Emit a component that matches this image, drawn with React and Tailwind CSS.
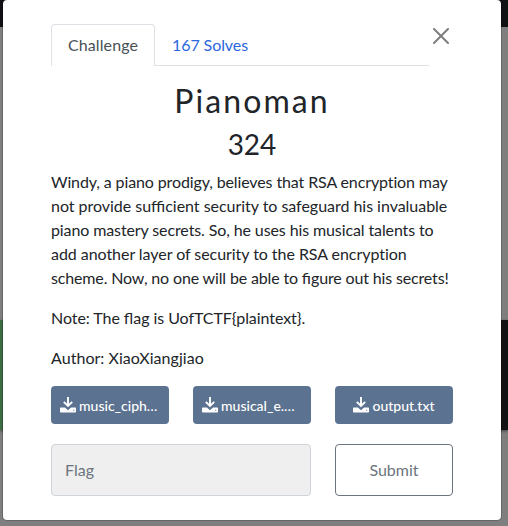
const files = [
  { name: "music_ciph…", layout: "justify-start pl-[9px]" },
  { name: "musical_e.…", layout: "justify-start pl-[9px]" },
  { name: "output.txt", layout: "justify-center" },
];

function DownloadIcon() {
  return (
    <svg viewBox="0 0 16 16" className="h-4 w-4 shrink-0">
      <path d="M8 0v8M3.8 4.9L8 9l4.2-4.1" fill="none" stroke="currentColor" strokeWidth="1.9" />
      <path
        fill="currentColor"
        fillRule="evenodd"
        d="M.7 10.6h4.2L8 13.2l3.1-2.6h4.2q.7 0 .7.7v3.4q0 .8-.8.8H.8q-.8 0-.8-.8v-3.4q0-.7.7-.7zM13.2 12.8v1h1v-1z"
      />
    </svg>
  );
}

function Tabs() {
  return (
    <div className="flex h-[42px] grow">
      <button className="w-[104px] rounded-t-[4px] border border-b-0 border-[#dee2e6] pb-px tracking-[0.12px] text-[#495057]">
        Challenge
      </button>
      <button className="grow border-b border-[#dee2e6] pl-[17px] text-left tracking-[-0.08px] text-[#2a66dd]">
        167 Solves
      </button>
    </div>
  );
}

function CloseButton() {
  return (
    <button className="flex h-6 w-6 items-center justify-center" aria-label="Close">
      <svg viewBox="0 0 16 16" className="h-4 w-4 fill-black opacity-50">
        <path d="M.293.293a1 1 0 011.414 0L8 6.586 14.293.293a1 1 0 111.414 1.414L9.414 8l6.293 6.293a1 1 0 01-1.414 1.414L8 9.414l-6.293 6.293a1 1 0 01-1.414-1.414L6.586 8 .293 1.707a1 1 0 010-1.414z" />
      </svg>
    </button>
  );
}

// Keeps the f-ligatures inside lines that have custom tracking.
function Lig({ children }) {
  return <span className="tracking-normal">{children}</span>;
}

function Backdrop() {
  return (
    <div className="absolute inset-0 flex flex-col bg-[#7f7f7f]">
      <div className="h-[27px] bg-[#101114]" />
      <div className="h-[293px]" />
      <div className="flex h-[110px] shadow-[0_1px_3px_rgba(0,0,0,0.5)]">
        <div className="w-1/2 bg-[#3e6b41]" />
        <div className="w-1/2 bg-[#101213]" />
      </div>
    </div>
  );
}

export default function App() {
  return (
    <div className="relative h-[526px] w-[508px] overflow-hidden font-['Lato',sans-serif] text-base leading-6 text-[#212529]">
      <Backdrop />
      <div className="relative -mt-px ml-0.5 h-[522px] w-[500px] rounded-[5px] border border-black/20 bg-white bg-clip-padding px-12 pt-6">
        <div className="flex">
          <Tabs />
          <CloseButton />
        </div>
        <h2 className="mt-4 text-center text-[32px] leading-[38px] tracking-[2.1px]">Pianoman</h2>
        <h3 className="mt-[7px] text-center text-[28px] leading-[34px]">324</h3>
        <div className="mt-[9px] flex flex-col gap-4 whitespace-nowrap">
          <p>
            <span className="block tracking-[-0.12px]">Windy, a piano prodigy, believes that RSA encryption may</span>
            <span className="block tracking-[-0.03px]">
              not provide su<Lig>ffi</Lig>cient security to safeguard his invaluable
            </span>
            <span className="block tracking-[-0.11px]">piano mastery secrets. So, he uses his musical talents to</span>
            <span className="block tracking-[-0.05px]">add another layer of security to the RSA encryption</span>
            <span className="block tracking-[-0.15px]">
              scheme. Now, no one will be able to <Lig>fi</Lig>gure out his secrets!
            </span>
          </p>
          <p className="tracking-[-0.06px]">
            Note: The <Lig>fl</Lig>ag is UofTCTF{"{plaintext}"}.
          </p>
          <p className="tracking-[0.04px]">Author: XiaoXiangjiao</p>
        </div>
        <div className="mt-4 grid grid-cols-3 gap-6">
          {files.map(({ name, layout }) => (
            <button
              key={name}
              className={`flex h-[38px] items-center gap-[3px] rounded-[4px] bg-[#5b7290] text-sm font-medium text-white ${layout}`}
            >
              <DownloadIcon />
              <span className="pt-px">{name}</span>
            </button>
          ))}
        </div>
        <div className="mt-5 grid grid-cols-3 gap-6">
          <input
            className="col-span-2 h-[52px] rounded-[4px] border border-[#ced4da] bg-[#efefef] px-[13px] pb-0.5 outline-none placeholder:text-[#6c757d]"
            placeholder="Flag"
          />
          <button className="h-[52px] rounded-[4px] border border-[#6c757d] text-[#6c757d]">
            Submit
          </button>
        </div>
      </div>
    </div>
  );
}
